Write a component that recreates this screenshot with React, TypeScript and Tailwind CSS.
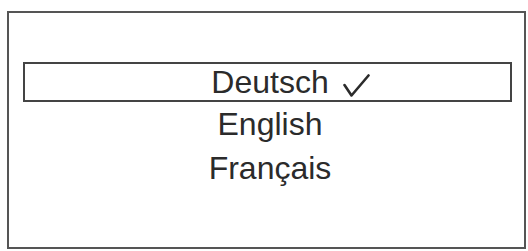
import React from 'react';

const languages = ['Deutsch', 'English', 'Français'];

function Check() {
  return (
    <svg className="absolute left-full top-[8px] ml-[14px] h-[23px] w-[27px]" viewBox="0 0 27 23" fill="none">
      <path d="M1.5 11 L8.5 21.5 L25.5 1.5" stroke="#2b2b2b" strokeWidth={2.6} strokeLinejoin="round" strokeLinecap="round" />
    </svg>
  );
}

export default function App() {
  const selected = 'Deutsch';

  return (
    <div className="h-[251px] w-[528px] bg-white pl-[7px] pt-[11px] pr-[2px] pb-[2px]">
      <div className="h-full w-full border-2 border-[#555555] pl-[14px] pr-[12px] pt-[49px] text-[#2b2b2b] font-['Liberation_Sans',sans-serif] text-[32px]">
        {languages.map((lang) => (
          <div
            key={lang}
            className={
              lang === selected
                ? 'flex h-[40px] items-center justify-center border-2 border-[#444444]'
                : 'flex h-[44px] items-center justify-center'
            }
          >
            <span className="relative pl-[5px] leading-none">
              {lang}
              {lang === selected && <Check />}
            </span>
          </div>
        ))}
      </div>
    </div>
  );
}
